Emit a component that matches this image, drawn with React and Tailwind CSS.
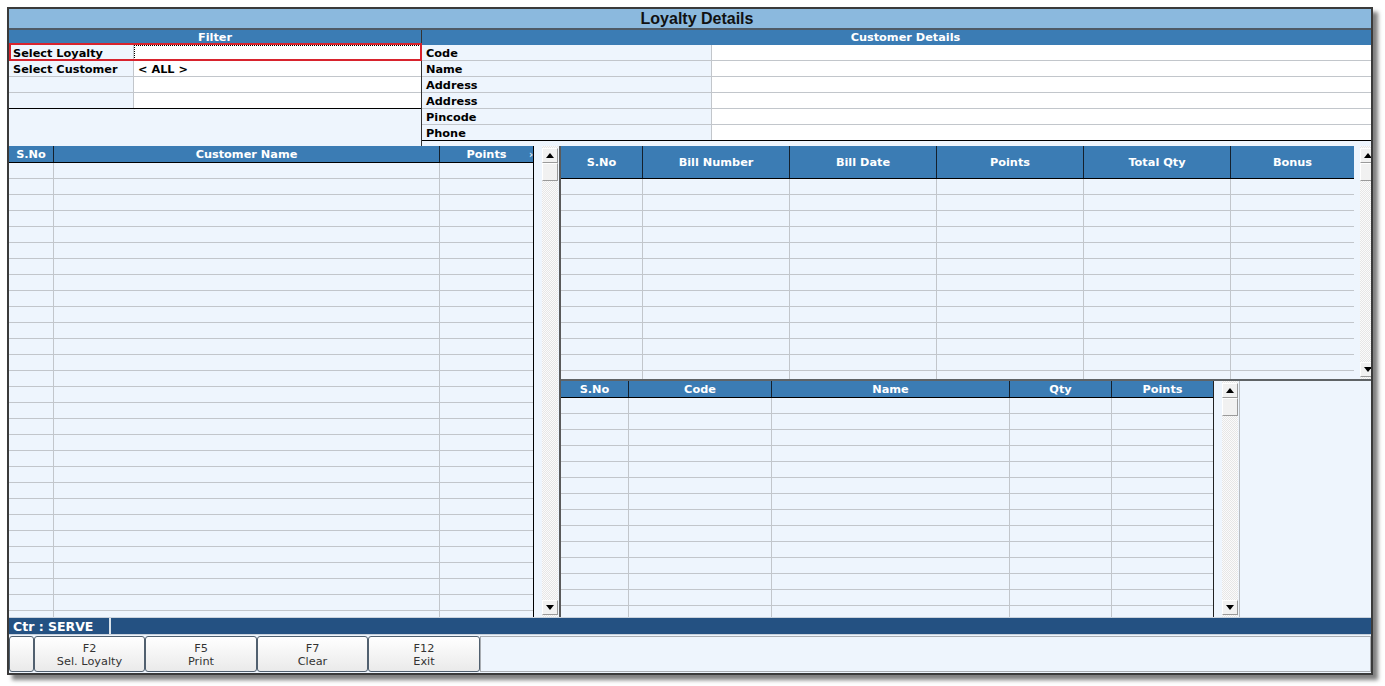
import React from "react";

const leftCols = [
  { label: "S.No", w: "w-[45px]" },
  { label: "Customer Name", w: "w-[386px]" },
  { label: "Points", w: "w-[93px]", last: true, extra: true },
];

const billCols = [
  { label: "S.No", w: "w-[82px]" },
  { label: "Bill Number", w: "w-[147px]" },
  { label: "Bill Date", w: "w-[147px]" },
  { label: "Points", w: "w-[147px]" },
  { label: "Total Qty", w: "w-[147px]" },
  { label: "Bonus", w: "w-[123px]", last: true },
];

const itemCols = [
  { label: "S.No", w: "w-[68px]" },
  { label: "Code", w: "w-[143px]" },
  { label: "Name", w: "w-[238px]" },
  { label: "Qty", w: "w-[102px]" },
  { label: "Points", w: "w-[101px]", last: true },
];

function Grid({ cols, headerH, rows, className }) {
  return (
    <div className={`flex flex-col h-full overflow-hidden shrink-0 ${className}`}>
      <div className={`flex ${headerH} shrink-0 bg-[#3b7cb4] border-b border-black`}>
        {cols.map((c, i) => (
          <div
            key={i}
            className={`${c.w} shrink-0 relative flex items-center justify-center pt-[2px] text-white font-bold text-[11.3px] ${c.last ? "" : "border-r border-[#14202c]"}`}
          >
            {c.label}
            {c.extra && (
              <span className="absolute right-[0px] top-[2px] text-[10px] leading-[14px] text-[#dfe8f2]">›</span>
            )}
          </div>
        ))}
      </div>
      {Array.from({ length: rows }).map((_, r) => (
        <div key={r} className="flex h-[16px] shrink-0 border-b border-[#c2c6cb]">
          {cols.map((c, i) => (
            <div key={i} className={`${c.w} shrink-0 ${c.last ? "" : "border-r border-[#c2c6cb]"}`} />
          ))}
        </div>
      ))}
    </div>
  );
}

function Arrow({ down }) {
  return (
    <svg width="8" height="5" viewBox="0 0 8 5">
      {down ? <path d="M0 0 H8 L4 5 Z" fill="#000" /> : <path d="M0 5 H8 L4 0 Z" fill="#000" />}
    </svg>
  );
}

function SBtn({ down }) {
  return (
    <div className="h-[15px] w-[16px] shrink-0 bg-[#f1f1f1] border border-t-white border-l-white border-r-[#9a9a9a] border-b-[#9a9a9a] flex items-center justify-center">
      <Arrow down={down} />
    </div>
  );
}

function ScrollBar({ outer }) {
  return (
    <div className={`${outer} h-full bg-[#eef5fd] flex shrink-0 overflow-hidden`}>
      <div className="w-[16px] shrink-0 h-full flex flex-col py-[2px] bg-[repeating-conic-gradient(#e6e6e6_0%_25%,#fbfbfb_0%_50%)] bg-[length:2px_2px]">
        <SBtn />
        <div className="h-[18px] w-[16px] shrink-0 bg-[#f1f1f1] border border-t-white border-l-white border-r-[#9a9a9a] border-b-[#9a9a9a]" />
        <div className="flex-1" />
        <SBtn down />
      </div>
    </div>
  );
}

function FKey({ k, label, w }) {
  return (
    <div className={`${w} h-[36px] shrink-0 rounded-[3px] border border-[#51606f] bg-linear-to-b from-white to-[#eaeaea] flex flex-col items-center justify-center pt-[1px] text-[11.3px] leading-[13px] text-[#333]`}>
      <span>{k}</span>
      <span>{label}</span>
    </div>
  );
}

export default function App() {
  const filterRows = [
    ["Select Loyalty", ""],
    ["Select Customer", "< ALL >"],
    ["", ""],
    ["", ""],
  ];
  const custRows = ["Code", "Name", "Address", "Address", "Pincode", "Phone"];

  return (
    <div className="w-[1385px] h-[686px] bg-white font-['DejaVu_Sans',sans-serif] text-[11.3px] overflow-hidden">
      <div className="ml-[7px] mt-[7px] w-[1366px] border-2 border-[#3a3a3a] bg-[#eef5fd] flex flex-col shadow-[5px_5px_4px_rgba(0,0,0,0.5)]">
        {/* Title */}
        <div className="h-[21px] shrink-0 bg-[#8bb9de] border-b-2 border-[#4e5a66] flex items-center justify-center pl-[14px] font-['Liberation_Sans',sans-serif] font-bold text-[16px] text-[#111]">
          Loyalty Details
        </div>

        {/* Top section */}
        <div className="h-[116px] shrink-0 flex">
          <div className="w-[413px] shrink-0 border-r border-[#333] flex flex-col">
            <div className="h-[15px] shrink-0 bg-[#3b7cb4] flex items-center justify-center pt-[2px] text-white font-bold">Filter</div>
            {filterRows.map(([l, v], i) => (
              <div
                key={i}
                className={`h-[16px] shrink-0 flex relative ${i === 3 ? "border-b border-black" : "border-b border-[#c2c6cb]"}`}
              >
                <div className="w-[125px] shrink-0 border-r border-[#c2c6cb] pl-[4px] font-bold leading-[17px] text-black bg-[#eef5fd]">{l}</div>
                <div className={`flex-1 bg-white pl-[4px] font-bold leading-[17px] text-black ${i === 0 ? "border border-dotted border-black" : ""}`}>{v}</div>
                {i === 0 && (
                  <div className="absolute -top-[2px] -bottom-[1px] left-0 -right-[1px] border-2 border-[#d8232d]" />
                )}
              </div>
            ))}
          </div>
          <div className="flex-1 flex flex-col">
            <div className="h-[15px] shrink-0 bg-[#3b7cb4] flex items-center justify-center pl-[18px] pt-[2px] text-white font-bold">Customer Details</div>
            {custRows.map((l, i) => (
              <div
                key={i}
                className={`h-[16px] shrink-0 flex ${i === 5 ? "border-b border-black" : "border-b border-[#c2c6cb]"}`}
              >
                <div className="w-[290px] shrink-0 border-r border-[#c2c6cb] pl-[4px] font-bold leading-[17px] text-black">{l}</div>
                <div className="flex-1 bg-white" />
              </div>
            ))}
          </div>
        </div>

        {/* Grid area */}
        <div className="h-[471px] shrink-0 flex">
          <Grid cols={leftCols} headerH="h-[17px]" rows={29} className="w-[525px] border-r border-black" />
          <ScrollBar outer="w-[25px] pl-[8px]" />
          <div className="flex-1 border-l-2 border-[#5a5a5a] flex flex-col">
            <div className="h-[235px] shrink-0 flex border-b-2 border-[#5f6366]">
              <Grid cols={billCols} headerH="h-[33px]" rows={13} className="w-[793px]" />
              <ScrollBar outer="w-[17px] pl-[6px]" />
            </div>
            <div className="flex-1 flex overflow-hidden">
              <Grid cols={itemCols} headerH="h-[17px]" rows={14} className="w-[653px] border-r border-[#222]" />
              <ScrollBar outer="w-[26px] pl-[8px] border-r border-[#b8bcc0]" />
              <div className="flex-1 bg-[#eef5fd]" />
            </div>
          </div>
        </div>

        {/* Status bar */}
        <div className="h-[18px] shrink-0 bg-[#245182] border-t border-[#111c28] border-b border-[#c9d2dc] flex">
          <div className="w-[102px] shrink-0 border-r-2 border-[#d9e2ea] pl-[4px] text-white font-bold text-[12.5px] leading-[17px]">
            Ctr : SERVE
          </div>
        </div>

        {/* Button bar */}
        <div className="h-[38px] shrink-0 flex items-start pt-[1px]">
          <FKey k="" label="" w="w-[25px]" />
          <FKey k="F2" label="Sel. Loyalty" w="w-[111px]" />
          <FKey k="F5" label="Print" w="w-[112px]" />
          <FKey k="F7" label="Clear" w="w-[111px]" />
          <FKey k="F12" label="Exit" w="w-[112px]" />
          <div className="flex-1 h-[36px] border border-[#a9adb2] bg-[#eef5fd]" />
        </div>
      </div>
    </div>
  );
}
